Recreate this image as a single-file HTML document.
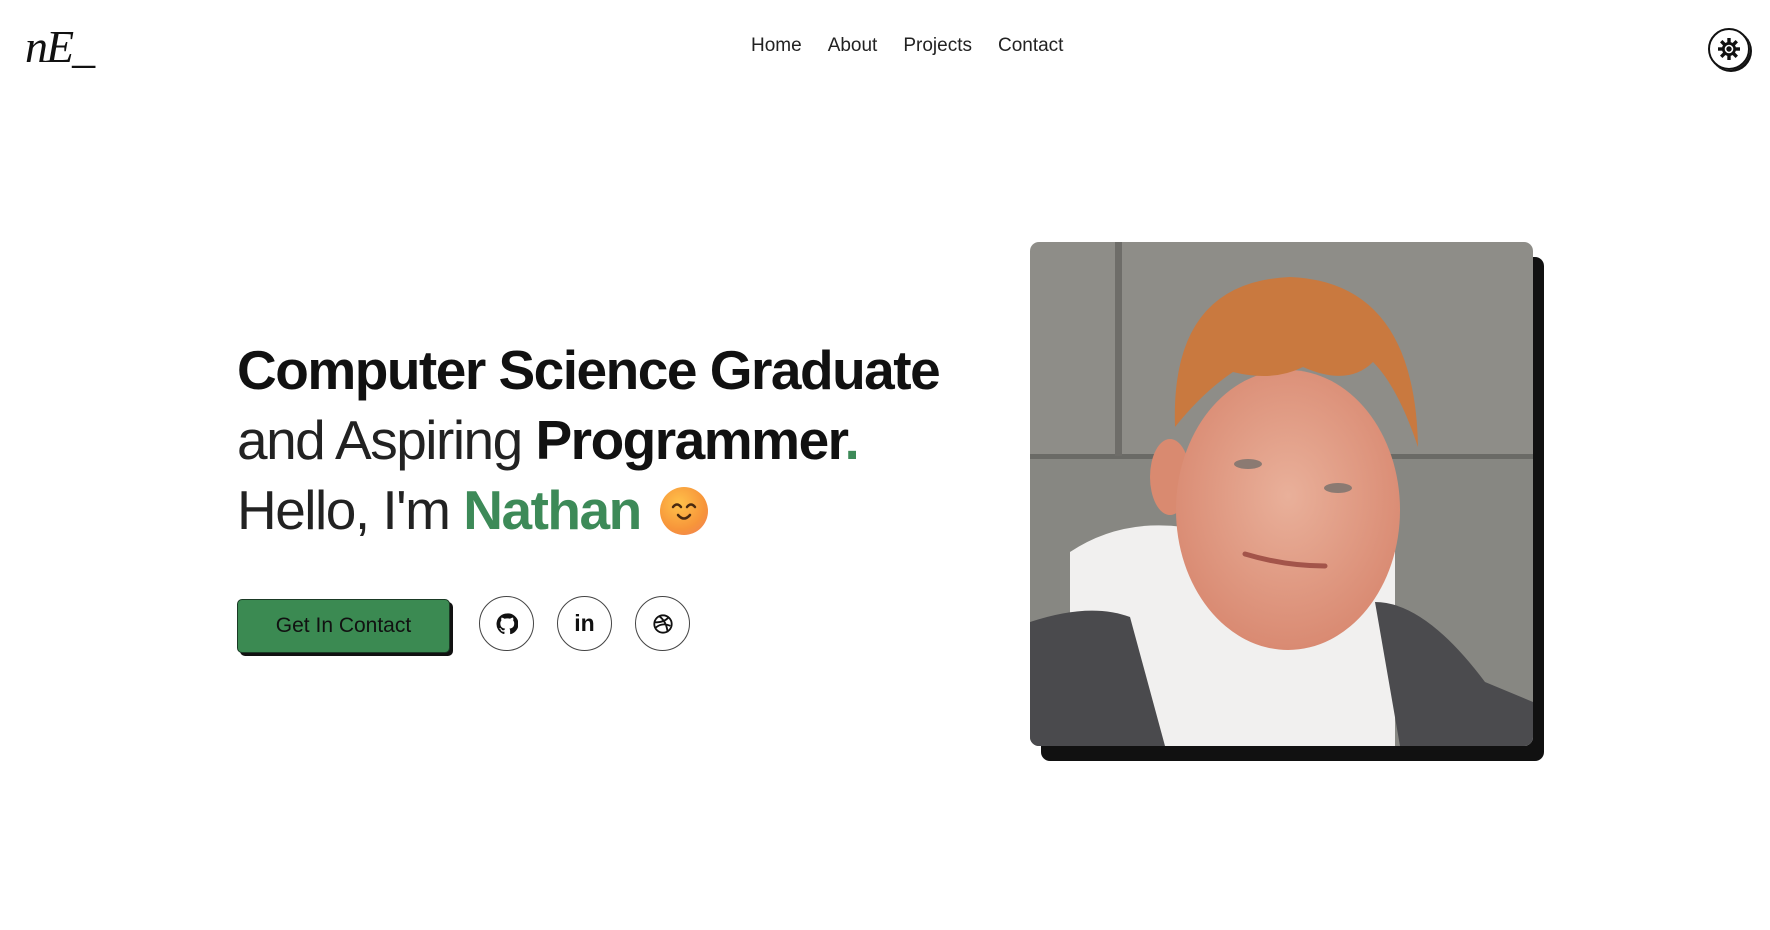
<!DOCTYPE html>
<html><head><meta charset="utf-8"><style>
*{margin:0;padding:0;box-sizing:border-box}
body{width:1770px;height:930px;background:#fff;font-family:"Liberation Sans",sans-serif;color:#111;position:relative;overflow:hidden}
.logo{position:absolute;left:25px;top:20px;font-family:"Liberation Serif",serif;font-style:italic;font-size:46px;letter-spacing:-2px}
.nav{position:absolute;top:35px;left:751px;font-size:19px;color:#222}
.nav span{margin-right:26px}
.toggle{position:absolute;left:1708px;top:28px;width:42px;height:42px;border-radius:50%;border:2px solid #111;box-shadow:2px 2px 0 #111;display:flex;align-items:center;justify-content:center}
h1{position:absolute;left:237px;top:335px;font-size:55px;line-height:70px;font-weight:400;letter-spacing:-1.5px;white-space:nowrap}
h1 b{font-weight:700}
.light{font-weight:300;color:#222}
.green{color:#3d8a58}
.btn{position:absolute;left:237px;top:599px;width:213px;height:54px;background:#3b8a52;border:1.5px solid #1a3a25;border-radius:5px;box-shadow:3px 3px 0 #111;font-size:21px;display:flex;align-items:center;justify-content:center;color:#111}
.ic{position:absolute;top:596px;width:55px;height:55px;border-radius:50%;border:1.5px solid #444;display:flex;align-items:center;justify-content:center}
.photo{position:absolute;left:1030px;top:242px;width:503px;height:504px;border-radius:9px;overflow:hidden;box-shadow:11px 15px 0 #111}
.emoji{display:inline-block;width:48px;height:48px;border-radius:50%;background:radial-gradient(circle at 40% 35%,#ffc24a,#f7953a 60%,#f07b5a);vertical-align:-6px;position:relative;margin-left:6px}
</style></head><body>
<div class="logo">nE_</div>
<div class="nav"><span>Home</span><span>About</span><span>Projects</span><span>Contact</span></div>
<div class="toggle"><svg width="24" height="24" viewBox="0 0 24 24"><g fill="#111"><circle cx="12" cy="12" r="7"/><g id="t"><rect x="10.3" y="1" width="3.4" height="5"/><rect x="10.3" y="18" width="3.4" height="5"/></g><use href="#t" transform="rotate(45 12 12)"/><use href="#t" transform="rotate(90 12 12)"/><use href="#t" transform="rotate(135 12 12)"/></g><circle cx="12" cy="12" r="3.5" fill="none" stroke="#fff" stroke-width="1.6"/></svg></div>
<h1><b>Computer Science Graduate</b><br><span class="light">and Aspiring </span><b>Programmer</b><b class="green">.</b><br><span class="light">Hello, I'm </span><b class="green">Nathan</b> <span class="emoji"><svg width="48" height="48" viewBox="0 0 48 48" style="position:absolute;left:0;top:0"><path d="M13 20q4-5 8 0M27 20q4-5 8 0" stroke="#4a2a10" stroke-width="2.5" fill="none" stroke-linecap="round"/><path d="M18 28q6 7 12 0" stroke="#4a2a10" stroke-width="2.5" fill="none" stroke-linecap="round"/></svg></span></h1>
<div class="btn">Get In Contact</div>
<div class="ic" style="left:479px"><svg width="22" height="22" viewBox="0 0 24 24"><path fill="#111" d="M12 .5a11.5 11.5 0 0 0-3.6 22.4c.6.1.8-.3.8-.6v-2c-3.2.7-3.9-1.5-3.9-1.5-.5-1.300-1.3-1.7-1.3-1.7-1-.7.1-.7.1-.7 1.2.1 1.8 1.2 1.8 1.2 1 1.8 2.7 1.3 3.4 1 .1-.8.4-1.3.7-1.6-2.6-.3-5.3-1.3-5.3-5.7 0-1.3.5-2.3 1.2-3.1-.1-.3-.5-1.5.1-3.1 0 0 1-.3 3.3 1.2a11 11 0 0 1 6 0C17.6 4.8 18.6 5.1 18.6 5.1c.6 1.6.2 2.8.1 3.1.8.8 1.2 1.9 1.2 3.1 0 4.4-2.7 5.4-5.3 5.7.4.4.8 1.1.8 2.2v3.2c0 .3.2.7.8.6A11.5 11.5 0 0 0 12 .5z"/></svg></div>
<div class="ic" style="left:557px;font-weight:700;font-size:23px">in</div>
<div class="ic" style="left:635px"><svg width="22" height="22" viewBox="0 0 24 24" fill="none" stroke="#111" stroke-width="2"><circle cx="12" cy="12" r="9.5"/><path d="M8 3.5q8 6 9 17.5M3 10q9 1 15-5M4 16q7-6 16-2"/></svg></div>
<div class="photo"><svg width="503" height="504" viewBox="0 0 503 504">
<defs><radialGradient id="f" cx="50%" cy="45%" r="55%"><stop offset="0" stop-color="#e9b09a"/><stop offset="1" stop-color="#d98a72"/></radialGradient></defs>
<rect width="503" height="504" fill="#8e8d88"/>
<rect x="0" y="214" width="503" height="290" fill="#878782"/>
<rect x="0" y="212" width="503" height="5" fill="#6a6a66"/>
<rect x="85" y="0" width="7" height="214" fill="#6e6d69"/>
<path d="M40 310q60-40 140-20l100 0q60-20 85 20l0 194L40 504z" fill="#f1f0ef"/>
<path d="M0 380q60-20 100-5l35 129H0z" fill="#4a4a4d"/>
<path d="M345 360q50 0 110 80l48 20v44H370z" fill="#4b4b4e"/>
<ellipse cx="140" cy="235" rx="20" ry="38" fill="#d98a70"/>
<ellipse cx="258" cy="268" rx="112" ry="140" fill="url(#f)"/>
<path d="M145 185q-5-145 115-150q125 5 128 170q-20-60-45-85q-25 25-70 5q-30 15-70 5q-30 20-58 55z" fill="#c9793f"/>
<ellipse cx="218" cy="222" rx="14" ry="5" fill="#8b7a72"/>
<ellipse cx="308" cy="246" rx="14" ry="5" fill="#8b7a72"/>
<path d="M215 312q40 12 80 12" stroke="#a3544a" stroke-width="5" fill="none" stroke-linecap="round"/>
</svg></div>
</body></html>
